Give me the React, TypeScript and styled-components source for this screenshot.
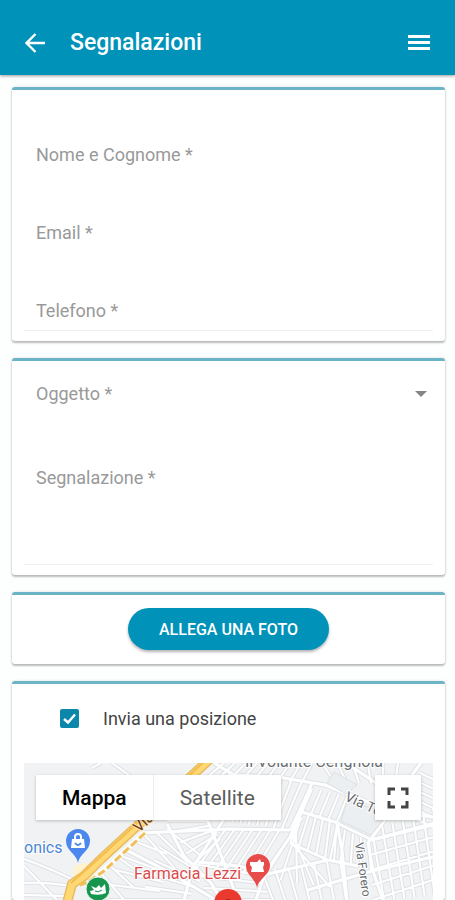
import React from "react";
import styled, { createGlobalStyle } from "styled-components";

const GlobalStyle = createGlobalStyle`
  *, *::before, *::after { box-sizing: border-box; }
  body { margin: 0; background: #fdfefe; font-family: Roboto, "Liberation Sans", sans-serif; }
  button, input, select, textarea { font: inherit; color: inherit; }
`;

const Page = styled.div`
  display: flex;
  flex-direction: column;
  min-height: 100vh;
`;

const Header = styled.header`
  display: flex;
  align-items: center;
  height: 75px;
  padding: 11px 20px 0 19px;
  background: #0092b9;
  color: #fff;
  box-shadow: 0 1px 3px rgba(0, 0, 0, 0.4);
`;

const IconButton = styled.button`
  display: flex;
  align-items: center;
  justify-content: center;
  width: 32px;
  height: 40px;
  padding: 0;
  border: 0;
  background: none;
`;

const Title = styled.h1`
  flex: 1;
  margin: 0 0 0 19px;
  font-size: 23px;
  line-height: 40px;
  font-weight: 500;
`;

const Form = styled.form`
  display: flex;
  flex: 1;
  flex-direction: column;
  gap: 17px;
  padding: 12px 10px 0 12px;
`;

const Card = styled.section<{ $padding?: string; $grow?: boolean }>`
  display: flex;
  flex-direction: column;
  flex: ${(p) => (p.$grow ? "1" : "none")};
  padding: ${(p) => p.$padding ?? "12px"};
  border-top: 3px solid #6bb4c8;
  border-radius: 3px;
  background: #fff;
  box-shadow: 0 2px 2px rgba(0, 0, 0, 0.24), 0 0 3px rgba(0, 0, 0, 0.14);
`;

const Field = styled.div<{ $height: number; $line?: boolean; $top?: boolean }>`
  display: flex;
  align-items: ${(p) => (p.$top ? "flex-start" : "flex-end")};
  height: ${(p) => p.$height}px;
  padding: 0 6px 0 12px;
  border-bottom: 1px solid ${(p) => (p.$line ? "#efefef" : "transparent")};
`;

const Label = styled.label`
  flex: none;
  color: #999;
  font-size: 18px;
  line-height: 38px;
`;

const Input = styled.input`
  flex: 1;
  min-width: 0;
  height: 38px;
  padding: 0 8px;
  border: 0;
  outline: 0;
  background: none;
  font-size: 18px;
`;

const Select = styled(Input).attrs({ as: "select" })`
  appearance: none;
`;

const TextArea = styled(Input).attrs({ as: "textarea" })`
  height: 100px;
  padding: 8px;
  resize: none;
`;

const ArrowSlot = styled.span`
  display: flex;
  align-items: center;
  height: 38px;
  pointer-events: none;
`;

const PhotoButton = styled.button`
  align-self: center;
  height: 42px;
  padding: 0 31px;
  border: 0;
  border-radius: 21px;
  background: #0092b9;
  color: #fff;
  font-size: 16px;
  font-weight: 500;
  box-shadow: 0 2px 3px rgba(0, 0, 0, 0.3);
`;

const CheckRow = styled.label`
  display: flex;
  align-items: center;
  gap: 24px;
  height: 69px;
  margin-bottom: 10px;
  padding-left: 36px;
  color: #444;
  font-size: 18px;
`;

const CheckWrap = styled.span`
  display: grid;
  place-items: center;

  & > * { grid-area: 1 / 1; }
  & > svg { pointer-events: none; }
`;

const Checkbox = styled.input`
  appearance: none;
  width: 19px;
  height: 19px;
  margin: 0;
  border: 2px solid #0c87ab;
  border-radius: 2px;

  &:checked { background: #0c87ab; }
`;

const MapFrame = styled.div`
  position: relative;
  flex: 1;
  min-height: 137px;
  overflow: hidden;
  background: #f0f2f3;
`;

const MapDrawing = styled.svg`
  position: absolute;
  inset: 0;
  width: 100%;
  height: 100%;
`;

const MapControls = styled.div`
  position: absolute;
  top: 12px;
  left: 12px;
  right: 12px;
  display: flex;
  justify-content: space-between;
`;

const MapTypes = styled.div`
  display: flex;
  background: #fff;
  box-shadow: 0 1px 3px rgba(0, 0, 0, 0.22);
`;

const MapType = styled.button<{ $active?: boolean }>`
  height: 45px;
  padding: 0 26px;
  border: 0;
  background: none;
  color: ${(p) => (p.$active ? "#000" : "#5c5c5c")};
  font-size: 21px;
  font-weight: ${(p) => (p.$active ? 500 : 400)};

  & + & { border-left: 1px solid #ececec; }
`;

const FullScreen = styled.button`
  display: flex;
  align-items: center;
  justify-content: center;
  width: 46px;
  height: 45px;
  padding: 0;
  border: 0;
  background: #fff;
  box-shadow: 0 1px 3px rgba(0, 0, 0, 0.22);
`;

type Pt = [number, number];

// Streets joining evenly spaced points of one road to those of another.
const between = (a: Pt, b: Pt, c: Pt, d: Pt, n: number) =>
  Array.from({ length: n + 1 }, (_, i) => {
    const t = i / n;
    const at = (p: Pt, q: Pt) =>
      `${Math.round((p[0] + (q[0] - p[0]) * t) * 10) / 10} ${Math.round((p[1] + (q[1] - p[1]) * t) * 10) / 10}`;
    return `M${at(a, b)}L${at(c, d)}`;
  }).join("");

const minorStreets = [
  // south of the highway
  between([76, 109], [110, 78], [100, 137], [143, 91], 4),
  between([95, 92], [85, 137], [143, 110], [132, 137], 3),
  between([119, 70], [143, 66], [153, 108], [176, 92], 2),
  between([143, 58], [169, 101], [184, 58], [196, 76], 4),
  between([135, 84], [116, 137], [180, 112], [164, 137], 4),
  between([202, 66], [256, 66], [172, 106], [228, 112], 6),
  between([170, 101], [185, 137], [235, 112], [247, 137], 3),
  // central blocks
  between([205, 11], [288, 20], [200, 58], [266, 67], 8),
  between([288, 26], [324, 32], [278, 49], [313, 59], 4),
  between([278, 49], [313, 59], [266, 80], [310, 98], 5),
  between([278, 55], [266, 78], [240, 115], [306, 124], 4),
  between([313, 63], [345, 78], [306, 97], [347, 107], 4),
  between([238, 108], [316, 97], [249, 137], [322, 137], 6),
  between([200, 0], [288, 0], [180, 17], [278, 19], 8),
  between([298, 0], [374, 0], [311, 20], [371, 21], 5),
  // eastern grid
  between([348, 67], [409, 45], [360, 137], [421, 132], 6),
  between([345, 77], [349, 137], [409, 60], [409, 117], 4),
  between([396, 10], [392, 56], [409, 16], [409, 64], 5),
].join("");

const mainStreets =
  "M117 70L206 66L266 67M184 58L214 137M200 56L169 104L160 137M190 0L210 12L254 14L301 22L326 32L370 49L409 54" +
  "M288 20L266 74L241 110L232 137M278 49L311 59L348 77L409 62M266 80L304 97L334 103" +
  "M313 59L318 88L323 137M363 54L344 80L349 108L359 137M174 99L215 103L244 111L304 97" +
  "M284 127L348 108L409 94M322 0L355 22L397 31M397 0L382 20L364 57M100 86L143 108L192 137M143 61L160 93L187 120L197 137";

const rural = "M0 96Q25 105 54 119M0 120Q24 119 52 124M0 103L33 137M0 132L41 133M68 5L77 0M88 0L109 15";

function TownMap() {
  return (
    <MapDrawing viewBox="0 0 409 137" preserveAspectRatio="xMidYMin slice" aria-label="Mappa di Cerignola" role="img">
      <rect width="409" height="1000" fill="#f0f2f3" />
      <g fill="none" strokeLinejoin="round">
        <path d={minorStreets} stroke="#dfe2e5" strokeWidth="4" />
        <path d={mainStreets} stroke="#dfe2e5" strokeWidth="5" />
        <path d={rural} stroke="#dfe3e8" strokeWidth="4" />
        <path d={minorStreets} stroke="#fff" strokeWidth="2" />
        <path d={mainStreets} stroke="#fff" strokeWidth="3" />
        <path d={rural} stroke="#fff" strokeWidth="2" />
      </g>
      <path d="M323 38L365 50L347 72L317 58Z" fill="#eceff1" stroke="#dde0e3" />
      <path d="M310 9L333 22L322 31L303 20Z" fill="#eceff1" stroke="#dde0e3" />
      <path d="M50 103Q63 97 75 104L64 120L49 113Z" fill="#fff2cf" />
      <g fill="none">
        <path d="M186 -4L76 97L60 113L48 121L43 140" stroke="#e8bd62" strokeWidth="10" />
        <path d="M186 -4L76 97L60 113L48 121L43 140" stroke="#ffd873" strokeWidth="7" />
        <path d="M183 -4L73 97L56 112L47 120" stroke="#f2bd51" strokeWidth="2" />
        <path d="M121 69L80 107L64 121" stroke="#fff" strokeWidth="5" />
        <path d="M121 70L80 108L64 119L56 122" stroke="#f0bf57" strokeWidth="3" strokeDasharray="8 3" />
      </g>
      <g fontFamily='Roboto, "Liberation Sans", sans-serif' stroke="#fff" strokeWidth="2" paintOrder="stroke">
        <text x="221" y="4" fontSize="16" fill="#6b6f73">Il Volante Cerignola</text>
        <text x="0" y="90" fontSize="16" fill="#4b86d4">onics</text>
        <text x="110" y="116" fontSize="16" fill="#dc4b4b">Farmacia Lezzi</text>
        <text transform="translate(115 70) rotate(-43)" fontSize="15" fill="#6a3527" stroke="#ffe7aa">Via</text>
        <text transform="translate(320 37) rotate(25)" fontSize="14" fill="#676b70">Via To</text>
        <text transform="translate(331 80) rotate(82)" fontSize="12" fill="#676b70">Via Forero</text>
      </g>
      <path d="M54 100C53 91 42 88 42 78a12 12 0 0 1 24 0C66 88 55 91 54 100Z" fill="#4c87ee" />
      <path d="M51 77V74a3 3 0 0 1 6 0V77" fill="none" stroke="#fff" strokeWidth="2" />
      <path d="M48 76H60L61 85H47Z" fill="#fff" />
      <path d="M51 80Q54 84 57 80" fill="none" stroke="#4c87ee" strokeWidth="2" />
      <circle cx="74" cy="126" r="12" fill="#17964e" stroke="#eef2ef" />
      <path d="M67 123L72 125L75 122L77 125L81 121L82 130Q76 133 67 131L66 128L70 127Z" fill="#fff" />
      <path d="M71 128Q74 130 78 127" fill="none" stroke="#17964e" />
      <path d="M233 125C232 116 222 112 222 103a12 12 0 0 1 24 0C246 112 234 116 233 125Z" fill="#e84c4a" />
      <path d="M226 99H233L236 96L237 99H240V102L239 104L240 109H227L228 104L226 102Z" fill="#fff" />
      <circle cx="204" cy="140" r="14" fill="#ea3a30" />
      <circle cx="204" cy="140" r="4" fill="#9f2721" />
    </MapDrawing>
  );
}

export default function App() {
  return (
    <>
      <GlobalStyle />
      <Page>
        <Header>
          <IconButton type="button" aria-label="Indietro">
            <svg width="22" height="22" viewBox="0 0 22 22" fill="none" stroke="#fff" strokeWidth="2.4">
              <path d="M11.5 2L2.5 11L11.5 20M2.5 11H21" />
            </svg>
          </IconButton>
          <Title>Segnalazioni</Title>
          <IconButton type="button" aria-label="Menu">
            <svg width="22" height="16" viewBox="0 0 22 16" fill="#fff">
              <path d="M0 0H22V3H0ZM0 6H22V9H0ZM0 12H22V15H0Z" />
            </svg>
          </IconButton>
        </Header>
        <Form onSubmit={(e) => e.preventDefault()}>
          <Card $padding="7px 12px 10px">
            <Field $height={78}>
              <Label htmlFor="name">Nome e Cognome *</Label>
              <Input id="name" type="text" />
            </Field>
            <Field $height={78}>
              <Label htmlFor="email">Email *</Label>
              <Input id="email" type="email" />
            </Field>
            <Field $height={78} $line>
              <Label htmlFor="phone">Telefono *</Label>
              <Input id="phone" type="tel" />
            </Field>
          </Card>
          <Card $padding="14px 12px 10px">
            <Field $height={84} $top>
              <Label htmlFor="subject">Oggetto *</Label>
              <Select id="subject" defaultValue="">
                <option value="" />
              </Select>
              <ArrowSlot>
                <svg width="12" height="6" viewBox="0 0 12 6">
                  <path d="M0 0H12L6 6Z" fill="#858585" />
                </svg>
              </ArrowSlot>
            </Field>
            <Field $height={106} $line $top>
              <Label htmlFor="report">Segnalazione *</Label>
              <TextArea id="report" />
            </Field>
          </Card>
          <Card $padding="13px 12px 14px">
            <PhotoButton type="button">ALLEGA UNA FOTO</PhotoButton>
          </Card>
          <Card $padding="0 12px" $grow>
            <CheckRow>
              <CheckWrap>
                <Checkbox type="checkbox" defaultChecked />
                <svg width="15" height="15" viewBox="0 0 15 15" fill="none" stroke="#fff" strokeWidth="2.4">
                  <path d="M2 8L6 11.5L13 3.5" />
                </svg>
              </CheckWrap>
              Invia una posizione
            </CheckRow>
            <MapFrame>
              <TownMap />
              <MapControls>
                <MapTypes>
                  <MapType type="button" $active>Mappa</MapType>
                  <MapType type="button">Satellite</MapType>
                </MapTypes>
                <FullScreen type="button" aria-label="Schermo intero">
                  <svg width="22" height="22" viewBox="0 0 22 22" fill="none" stroke="#444" strokeWidth="3">
                    <path d="M2 8V2H8M14 2H20V8M20 14V20H14M8 20H2V14" />
                  </svg>
                </FullScreen>
              </MapControls>
            </MapFrame>
          </Card>
        </Form>
      </Page>
    </>
  );
}
